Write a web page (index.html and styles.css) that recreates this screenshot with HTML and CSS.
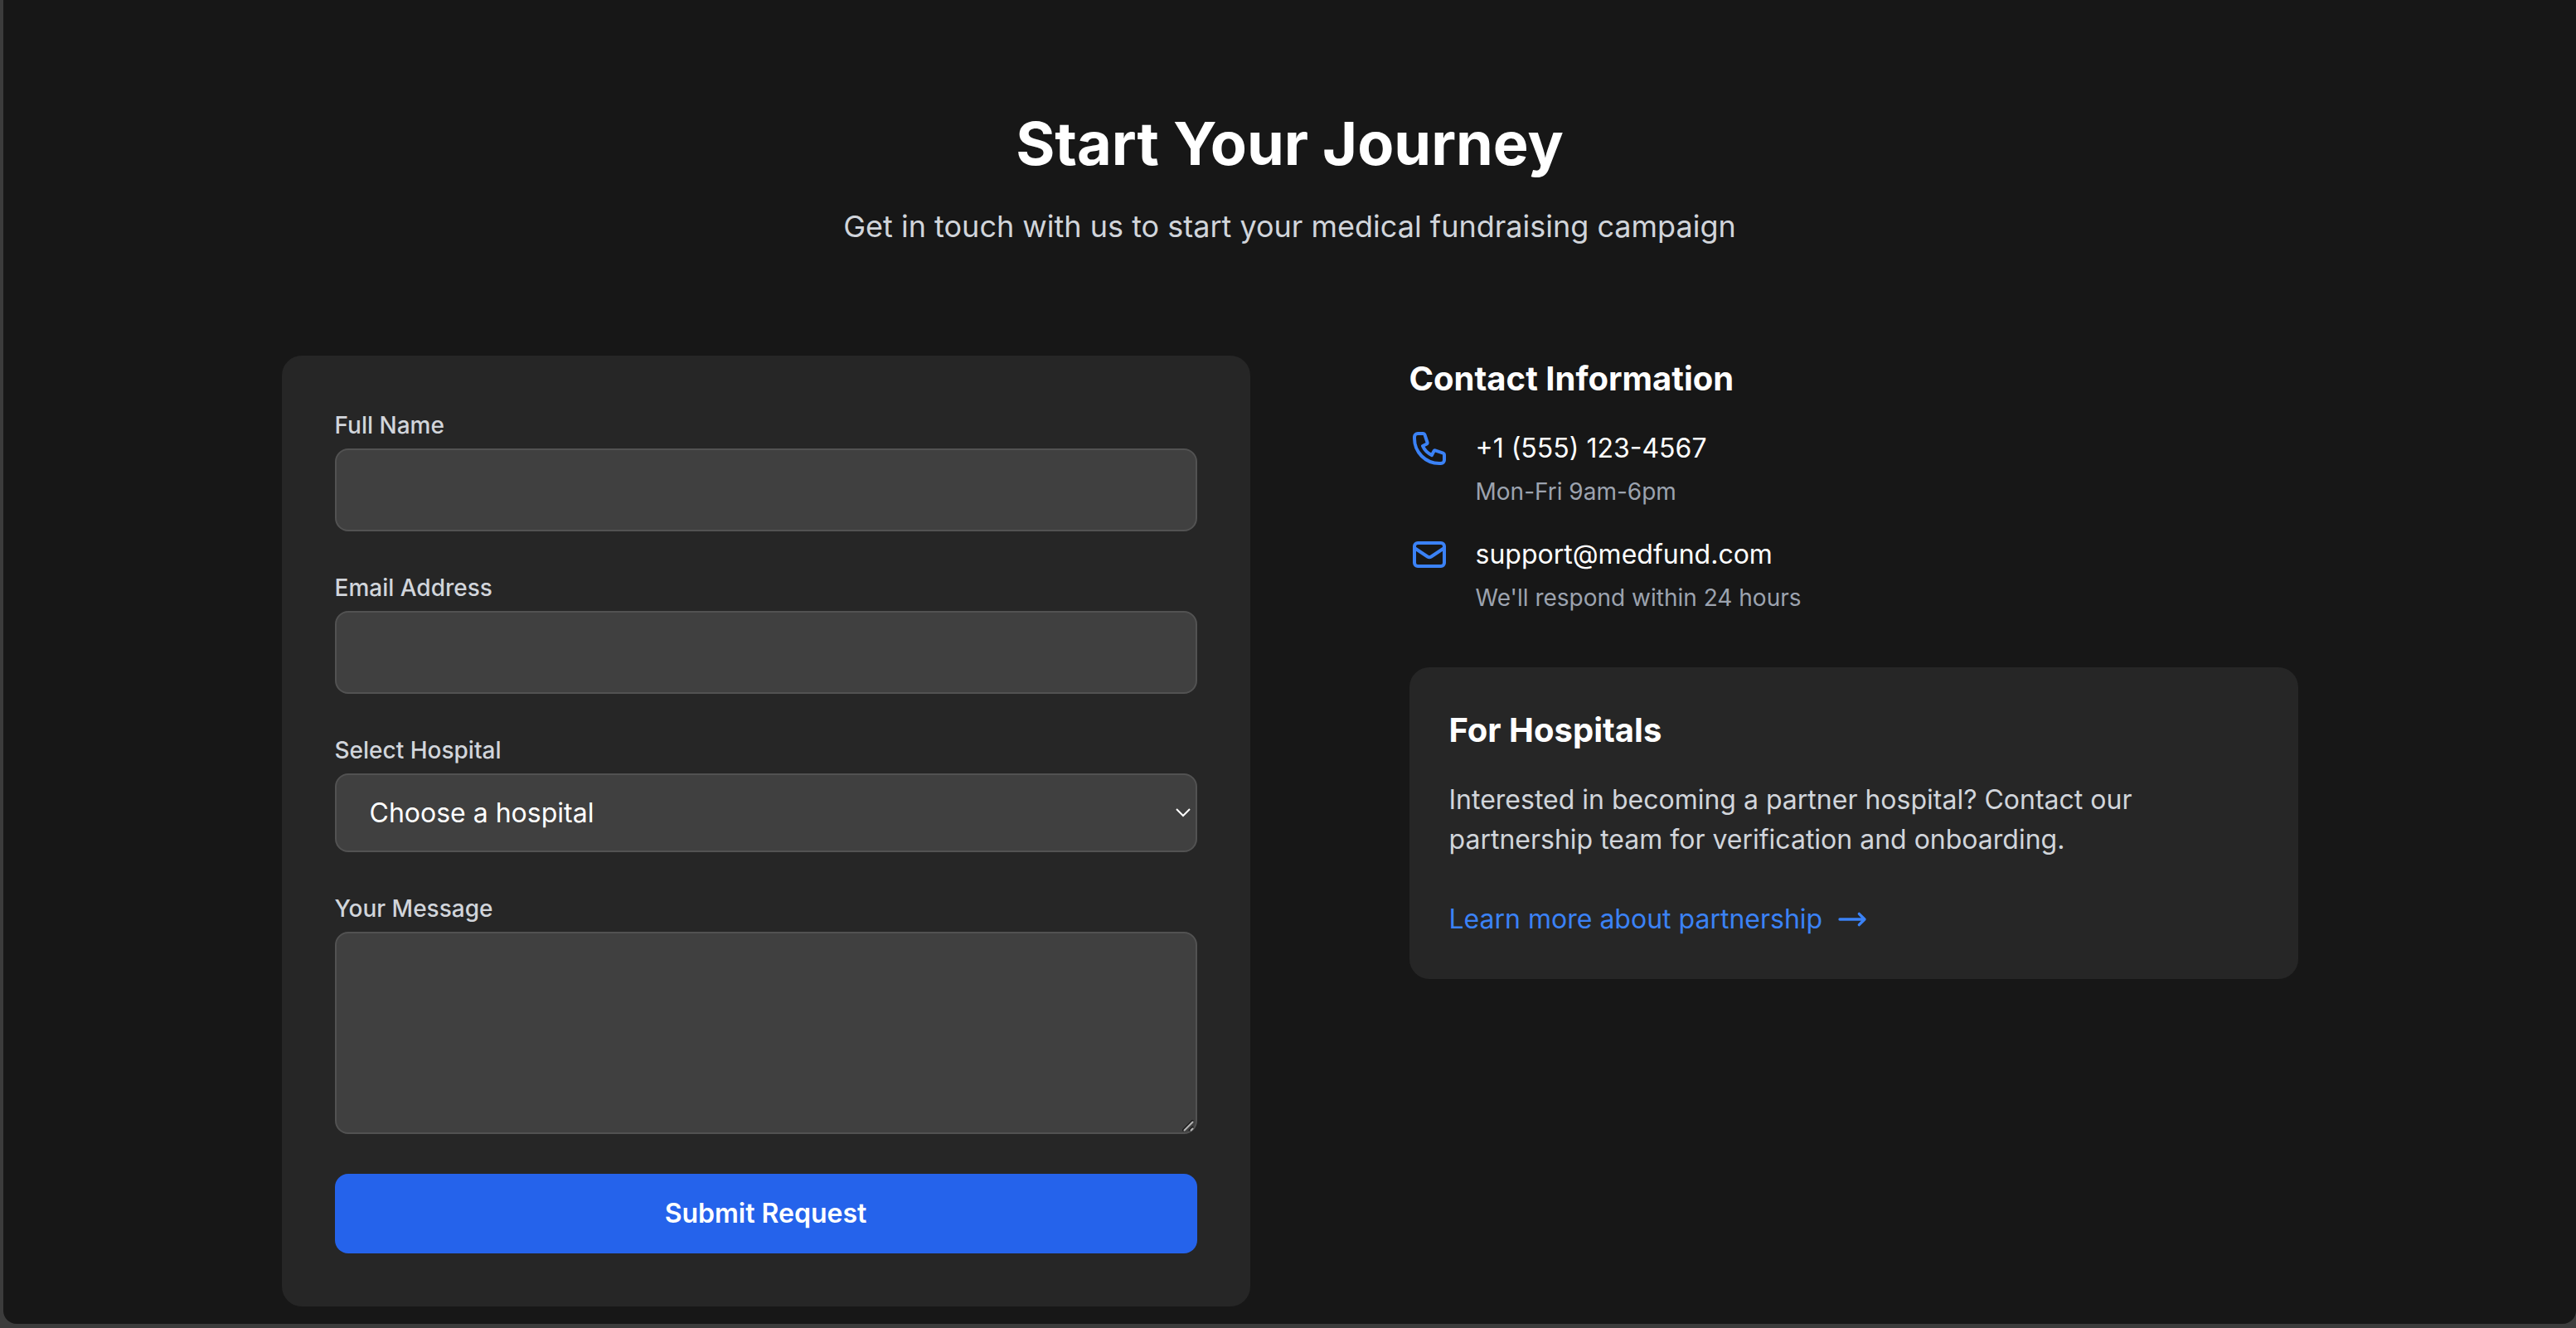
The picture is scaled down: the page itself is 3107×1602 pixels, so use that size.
FILE: index.html
```html
<!DOCTYPE html>
<html lang="en">
<head>
  <meta charset="utf-8">
  <meta name="viewport" content="width=device-width, initial-scale=1">
  <title>MedFund – Contact</title>
  <link rel="stylesheet" href="styles.css">
</head>
<body>
  <main class="page">
    <div class="container">
      <header class="intro">
        <h1 class="intro-title">Start Your Journey</h1>
        <p class="intro-text">Get in touch with us to start your medical fundraising campaign</p>
      </header>

      <div class="columns">
        <form class="card form">
          <div class="field">
            <label class="label" for="name">Full Name</label>
            <input class="control" id="name" name="name" type="text">
          </div>
          <div class="field">
            <label class="label" for="email">Email Address</label>
            <input class="control" id="email" name="email" type="email">
          </div>
          <div class="field">
            <label class="label" for="hospital">Select Hospital</label>
            <div class="control-wrap">
              <select class="control select" id="hospital" name="hospital">
                <option>Choose a hospital</option>
              </select>
              <svg class="chevron" viewBox="0 0 20 12" aria-hidden="true"><path d="M2 2l8 8 8-8"/></svg>
            </div>
          </div>
          <div class="field">
            <label class="label" for="message">Your Message</label>
            <div class="control-wrap">
              <textarea class="control textarea" id="message" name="message" rows="4"></textarea>
              <svg class="grip" viewBox="0 0 14 14" aria-hidden="true">
                <path class="grip-shade" d="M0 13L13 0M8 13L13 8"/>
                <path class="grip-light" d="M2 13L13 2M10 13L13 10"/>
              </svg>
            </div>
          </div>
          <button class="submit" type="submit">Submit Request</button>
        </form>

        <div class="aside">
          <section class="contact">
            <h2 class="heading">Contact Information</h2>
            <div class="contact-row">
              <svg class="icon" viewBox="0 0 24 24" aria-hidden="true"><path d="M3 5a2 2 0 012-2h3.28a1 1 0 01.948.684l1.498 4.493a1 1 0 01-.502 1.21l-2.257 1.13a11.042 11.042 0 005.516 5.516l1.13-2.257a1 1 0 011.21-.502l4.493 1.498a1 1 0 01.684.949V19a2 2 0 01-2 2h-1C9.716 21 3 14.284 3 6V5z"/></svg>
              <div class="contact-body">
                <p class="contact-main">+1 (555) 123-4567</p>
                <p class="contact-note">Mon-Fri 9am-6pm</p>
              </div>
            </div>
            <div class="contact-row">
              <svg class="icon" viewBox="0 0 24 24" aria-hidden="true"><path d="M3 8l7.89 5.26a2 2 0 002.22 0L21 8M5 19h14a2 2 0 002-2V7a2 2 0 00-2-2H5a2 2 0 00-2 2v10a2 2 0 002 2z"/></svg>
              <div class="contact-body">
                <p class="contact-main">support@medfund.com</p>
                <p class="contact-note">We'll respond within 24 hours</p>
              </div>
            </div>
          </section>

          <section class="card partner">
            <h2 class="heading">For Hospitals</h2>
            <p class="partner-text">Interested in becoming a partner hospital? Contact our partnership team for verification and onboarding.</p>
            <a class="link" href="#partnership">Learn more about partnership
              <svg class="icon icon-small" viewBox="0 0 24 24" aria-hidden="true"><path d="M17 8l4 4m0 0l-4 4m4-4H3"/></svg>
            </a>
          </section>
        </div>
      </div>
    </div>
  </main>
</body>
</html>
```
FILE: styles.css
```css
*,
*::before,
*::after {
  box-sizing: border-box;
}

body {
  margin: 0;
  padding: 0 0 5px 4px;
  background: #3c3c3c;
  color: #fff;
  font-family: Inter, "Liberation Sans", sans-serif;
  font-size: 32px;
  line-height: 48px;
}

h1,
h2,
p {
  margin: 0;
}

.page {
  padding: 133px 0 21px;
  background: #171717;
  border-radius: 0 0 16px 16px;
}

.container {
  max-width: 2560px;
  margin: 0 auto;
  padding: 0 64px;
}

.intro {
  margin-bottom: 128px;
  text-align: center;
}

.intro-title {
  margin-bottom: 32px;
  font-size: 72px;
  line-height: 80px;
  font-weight: 700;
}

.intro-text {
  color: #d1d5db;
  font-size: 36px;
  line-height: 56px;
}

.columns {
  display: grid;
  grid-template-columns: repeat(2, minmax(0, 1fr));
  gap: 96px;
  align-items: start;
}

.card {
  background: #262626;
  border-radius: 24px;
}

.form {
  display: flex;
  flex-direction: column;
  gap: 48px;
  padding: 64px;
}

.field {
  display: flex;
  flex-direction: column;
  gap: 8px;
}

.label {
  color: #d1d5db;
  font-size: 28px;
  line-height: 40px;
  font-weight: 500;
}

.control {
  display: block;
  width: 100%;
  margin: 0;
  padding: 24px 32px;
  border: 2px solid #525252;
  border-radius: 16px;
  background: #404040;
  color: #fff;
  font: inherit;
}

.control-wrap {
  position: relative;
}

.select {
  height: 95px;
  padding: 0 40px;
  appearance: none;
}

.chevron {
  position: absolute;
  top: 41px;
  right: 7px;
  width: 20px;
  height: 12px;
  fill: none;
  stroke: #fff;
  stroke-width: 2;
  pointer-events: none;
}

.textarea {
  resize: vertical;
}

.textarea::-webkit-resizer {
  background: transparent;
}

.grip {
  position: absolute;
  right: 4px;
  bottom: 3px;
  width: 14px;
  height: 14px;
  fill: none;
  pointer-events: none;
}

.grip-shade {
  stroke: #1c1c1c;
  stroke-width: 2;
}

.grip-light {
  stroke: #b4b4b4;
  stroke-width: 2;
}

.submit {
  padding: 24px 32px;
  border: 0;
  border-radius: 16px;
  background: #2563eb;
  color: #fff;
  font: inherit;
  font-weight: 600;
}

.aside {
  display: flex;
  flex-direction: column;
  gap: 64px;
  padding-left: 96px;
}

.contact {
  display: flex;
  flex-direction: column;
  gap: 32px;
}

.heading {
  font-size: 40px;
  line-height: 56px;
  font-weight: 700;
}

.contact-row {
  display: flex;
  align-items: flex-start;
  gap: 32px;
}

.contact-body {
  display: flex;
  flex-direction: column;
  gap: 8px;
}

.contact-note {
  color: #9ca3af;
  font-size: 28px;
  line-height: 40px;
}

.icon {
  flex: none;
  width: 48px;
  height: 48px;
  fill: none;
  stroke: #3b82f6;
  stroke-width: 2;
  stroke-linecap: round;
  stroke-linejoin: round;
}

.icon-small {
  width: 40px;
  height: 40px;
}

.partner {
  padding: 48px;
}

.partner-text {
  margin: 32px 0 48px;
  color: #d1d5db;
}

.link {
  display: flex;
  align-items: center;
  gap: 16px;
  width: fit-content;
  color: #3b82f6;
  text-decoration: none;
}

@media (max-width: 1600px) {
  .columns {
    grid-template-columns: minmax(0, 1fr);
  }

  .aside {
    padding-left: 0;
  }
}
```
